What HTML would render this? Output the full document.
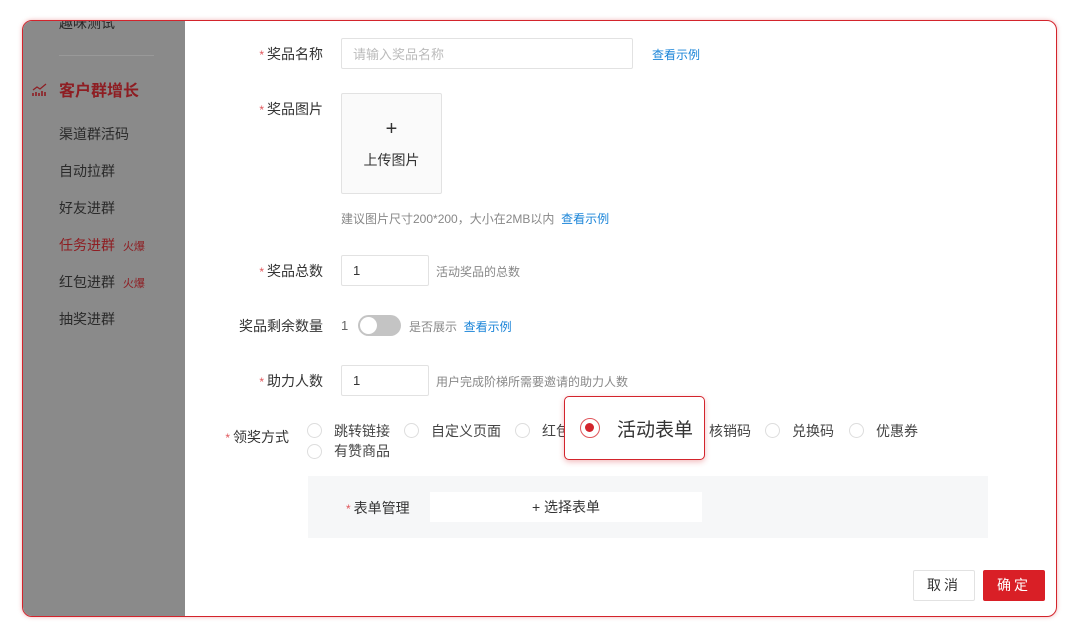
<!DOCTYPE html>
<html><head><meta charset="utf-8"><style>
*{margin:0;padding:0;box-sizing:border-box}
body{width:1080px;height:641px;background:#fff;font-family:"Liberation Sans","Noto Sans CJK SC",sans-serif;color:#333;position:relative;overflow:hidden;font-size:13px}
.frame{position:absolute;left:22px;top:20px;width:1035px;height:597px;border:1.5px solid #d3242c;border-radius:10px;overflow:hidden;box-shadow:0 0 4px rgba(211,36,44,.35)}
.side{position:absolute;left:0;top:0;width:162px;height:100%;background:#8a8a8a}
.a{position:absolute;white-space:nowrap}
.st{position:absolute;left:36px;font-size:14px;color:#2a2a2a}
.red{color:#8e1d22}
.lbl{position:absolute;font-size:14px;color:#333;text-align:right;white-space:nowrap}
.lbl i{font-style:normal;color:#e0575c;font-size:12px;margin-right:3px}
.inp{position:absolute;border:1px solid #e2e2e2;border-radius:2px;background:#fff;font-size:13px;padding-left:11px;display:flex;align-items:center}
.hint{position:absolute;font-size:12px;color:#888;white-space:nowrap}
.link{color:#1a84d8}
.rad{position:absolute;width:15px;height:15px;border:1px solid #ddd;border-radius:50%}
.rt{position:absolute;font-size:14px;color:#444;white-space:nowrap}
</style></head><body>
<div class="frame">
<div class="side">
<div class="st" style="top:-8px">趣味测试</div>
<div style="position:absolute;left:36px;top:34px;width:95px;height:1px;background:#999"></div>
<svg style="position:absolute;left:9px;top:62px" width="16" height="14" viewBox="0 0 16 14"><path d="M1 13V10M4 13V9M7 13V10M10 13V8M13 13V9" stroke="#8e1d22" stroke-width="1.6"/><path d="M1 7L5 4L8 6L14 1" stroke="#8e1d22" stroke-width="1.2" fill="none"/></svg>
<div class="st red" style="top:56px;font-size:16px;font-weight:bold">客户群增长</div>
<div class="st" style="top:103px">渠道群活码</div>
<div class="st" style="top:140px">自动拉群</div>
<div class="st" style="top:177px">好友进群</div>
<div class="st red" style="top:214px">任务进群 <span style="font-size:11px;margin-left:4px">火爆</span></div>
<div class="st" style="top:251px">红包进群 <span class="red" style="font-size:11px;margin-left:4px">火爆</span></div>
<div class="st" style="top:288px">抽奖进群</div>
</div>
</div>
<div class="lbl" style="right:757px;top:44px"><i>*</i>奖品名称</div>
<div class="inp" style="left:341px;top:38px;width:292px;height:31px;color:#bbb">请输入奖品名称</div>
<div class="hint link" style="left:652px;top:46px">查看示例</div>
<div class="lbl" style="right:757px;top:99px"><i>*</i>奖品图片</div>
<div class="inp" style="left:341px;top:93px;width:101px;height:101px;background:#fafafa;display:block;padding:0;text-align:center;font-size:14px"><div style="font-size:20px;margin-top:24px;line-height:22px">+</div><div style="margin-top:10px">上传图片</div></div>
<div class="hint" style="left:341px;top:210px">建议图片尺寸200*200，大小在2MB以内 &nbsp;<span class="link">查看示例</span></div>
<div class="lbl" style="right:757px;top:261px"><i>*</i>奖品总数</div>
<div class="inp" style="left:341px;top:255px;width:88px;height:31px">1</div>
<div class="hint" style="left:436px;top:263px">活动奖品的总数</div>
<div class="lbl" style="right:757px;top:316px">奖品剩余数量</div>
<div class="a" style="left:341px;top:318px;font-size:13px;color:#666">1</div>
<div class="a" style="left:358px;top:315px;width:43px;height:21px;border-radius:11px;background:#c4c4c4"><div style="position:absolute;left:2px;top:2px;width:17px;height:17px;border-radius:50%;background:#fff"></div></div>
<div class="hint" style="left:409px;top:318px">是否展示 &nbsp;<span class="link">查看示例</span></div>
<div class="lbl" style="right:757px;top:371px"><i>*</i>助力人数</div>
<div class="inp" style="left:341px;top:365px;width:88px;height:31px">1</div>
<div class="hint" style="left:436px;top:373px">用户完成阶梯所需要邀请的助力人数</div>
<div class="lbl" style="right:791px;top:427px"><i>*</i>领奖方式</div>
<div class="rad" style="left:307px;top:423px"></div><div class="rt" style="left:334px;top:421px">跳转链接</div>
<div class="rad" style="left:404px;top:423px"></div><div class="rt" style="left:431px;top:421px">自定义页面</div>
<div class="rad" style="left:515px;top:423px"></div><div class="rt" style="left:542px;top:421px">红包</div>
<div class="rt" style="left:709px;top:421px">核销码</div>
<div class="rad" style="left:765px;top:423px"></div><div class="rt" style="left:792px;top:421px">兑换码</div>
<div class="rad" style="left:849px;top:423px"></div><div class="rt" style="left:876px;top:421px">优惠券</div>
<div class="rad" style="left:307px;top:444px"></div><div class="rt" style="left:334px;top:441px">有赞商品</div>
<div class="a" style="left:564px;top:396px;width:141px;height:64px;background:#fff;border:1.5px solid #d3242c;border-radius:5px;box-shadow:0 2px 6px rgba(211,36,44,.3)">
<div style="position:absolute;left:15px;top:21px;width:20px;height:20px;border:1.5px solid #e0575c;border-radius:50%"><div style="position:absolute;left:4px;top:4px;width:9px;height:9px;border-radius:50%;background:#d3242c"></div></div>
<div style="position:absolute;left:52px;top:18px;font-size:19px;color:#333">活动表单</div>
</div>
<div class="a" style="left:308px;top:476px;width:680px;height:62px;background:#f6f7f8"></div>
<div class="lbl" style="left:346px;top:498px"><i>*</i>表单管理</div>
<div class="a" style="left:430px;top:492px;width:272px;height:30px;background:#fff;font-size:14px;text-align:center;line-height:30px;color:#333">+ 选择表单</div>
<div class="a" style="left:913px;top:570px;width:62px;height:31px;border:1px solid #e2e2e2;border-radius:2px;text-align:center;line-height:29px;font-size:14px;letter-spacing:3px">取消</div>
<div class="a" style="left:983px;top:570px;width:62px;height:31px;background:#d91f26;border-radius:2px;text-align:center;line-height:31px;font-size:14px;color:#fff;letter-spacing:3px">确定</div>
</body></html>
